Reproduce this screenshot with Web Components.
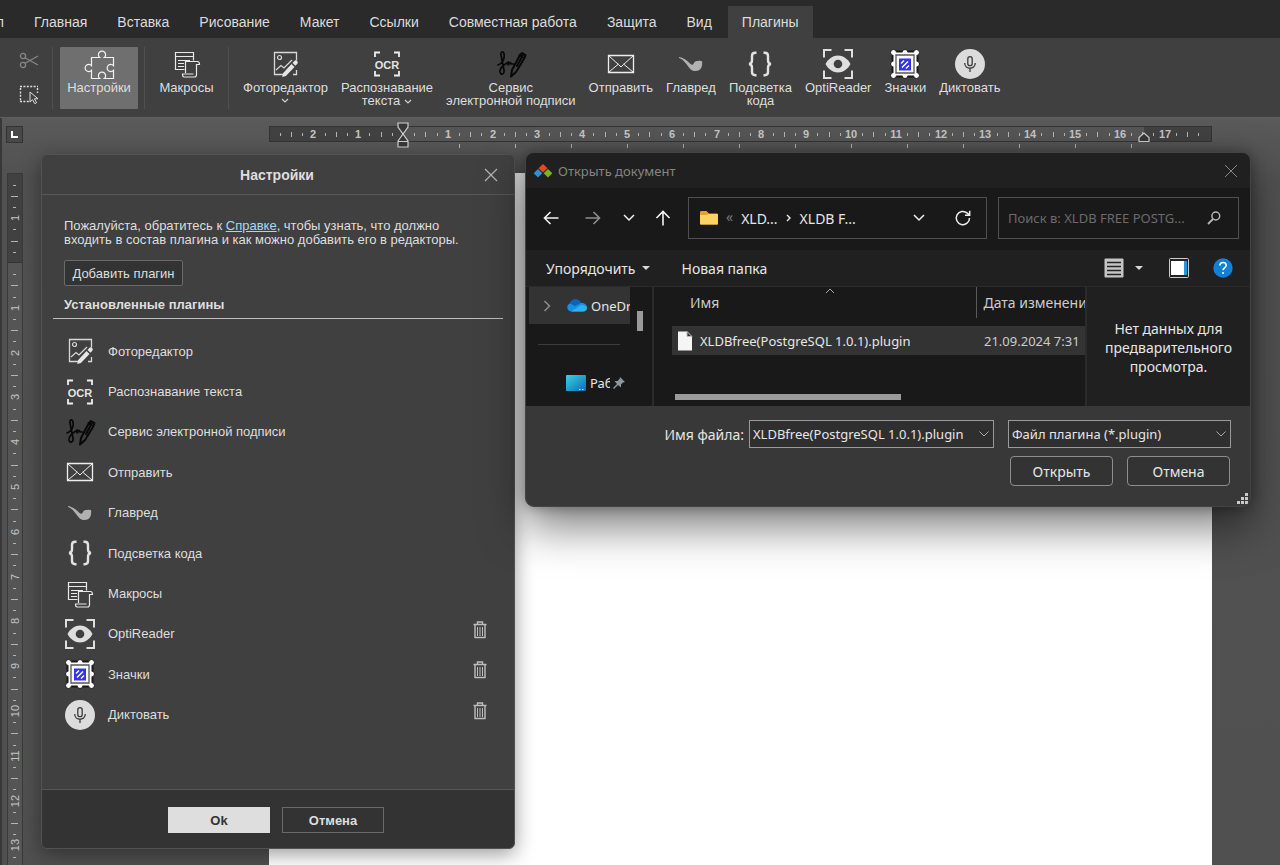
<!DOCTYPE html>
<html lang="ru">
<head>
<meta charset="utf-8">
<title>Плагины</title>
<style>
html,body{height:100%;margin:0}
body{background:#535353;font-family:"Liberation Sans",Arial,sans-serif;font-size:13px;color:#dedede;overflow:hidden}
</style>
</head>
<body>
<editor-app></editor-app>
<script>
const ICONS = {
cut:[20,20,`<g fill="none" stroke="#858585" stroke-width="1.3"><circle cx="4" cy="5" r="2.6"/><circle cx="4" cy="14" r="2.6"/><path d="M6 6.7 19 14M6 12.3 19 5"/></g>`],
marquee:[20,20,`<path d="M1 1.5h18M1 16.5h10M1.5 3v13M18.5 3v5" fill="none" stroke="#ddd" stroke-width="1.4" stroke-dasharray="2 1.4"/><path d="M11 7v10l2.5-2.3 2.3 4 1.8-1-2.2-3.9H19z" fill="#404040" stroke="#ddd"/>`],
puzzle:[30,30,`<path d="M7.5 8.5h8.2a3.6 3.6 0 1 1 4.6 0h9.2v8.2a3.6 3.6 0 1 0 0 4.6v8.2h-9.2a3.6 3.6 0 1 0-4.6 0H7.5v-8.2a3.6 3.6 0 1 1 0-4.6z" fill="none" stroke="#f2f2f2" stroke-width="1.2"/>`],
macros:[30,30,`<g fill="none" stroke="#e8e8e8" stroke-width="1.2"><path d="M12.5 20.5H3.5V3.5h18v8M3.5 7.5h18M6 11.5h12M6 14.5h6M6 17.5h6"/><path d="M13.5 24V12.500h12c1.600 0 2 1 2 3h-3v10c0 2-.8 2.500-2 2.500H12c-1 0-1.500-1-1.500-3h11"/></g>`],
photo:[30,30,`<g fill="none" stroke="#d8d8d8"><path d="M14 25.500H4.500v-22h22v8M26.500 21v4.500H23" stroke-width="1.300"/><circle cx="9.500" cy="8.500" r="2" stroke-width="1.200"/><path d="m6 21 5-4.500 3 2.500 8-8" stroke-width="1.200"/></g><path d="m13 24.300 8.500-9.200 3 2.800-8.600 9.200-3.700.8zM22.500 14l1.800-1.900a1.900 1.900 0 0 1 2.800 0 1.900 1.900 0 0 1 .2 2.700l-1.800 1.900z" fill="#e6e6e6"/>`],
ocr:[30,30,`<path d="M3 8V3.500h5M22 3.500h5V8M27 22v4.500h-5M8 26.500H3V22" fill="none" stroke="#eee" stroke-width="1.800"/><text x="15" y="19.500" text-anchor="middle" font-family="Liberation Sans" font-size="11" font-weight="bold" fill="#e4e4e4">OCR</text>`],
sign:[30,30,`<g fill="none" stroke="#080808" stroke-linecap="round" stroke-linejoin="round"><path d="M2 16c4-1 7-6 6-11-.4-3-3.500-3-3 1l3 15c.7 4-3 6-4 2-.5-3 3-7 7-9l1.500-1-.5 3 2.500-2.500.5 1.500h3" stroke-width="1.700"/><path d="m16 21 8-15 2-2 3.500 2-1 3-8.500 14-5 4.500zM23.500 6l5 3M27 6l-6 11" stroke-width="2"/></g>`],
mail:[30,30,`<g fill="none" stroke="#eee"><path d="M2.500 6.500h25v17h-25z" stroke-width="1.300"/><path d="m3 7 9.500 8.500L15 18l2.500-2.500L27 7M3 23l9.500-8M27 23l-9.500-8"/></g>`],
pipe:[30,30,`<path d="M3 8c4 .5 8 3.500 11 6.500 2 1.800 3 1.700 4-.5.700-1.500 2-2 4-1.900 1.500-.6 3.300-.4 4.200.3-.1 3.500.1 6.500-2.900 8.500-2.600 1.700-6.600 1.500-9-1C11 16.500 8 10.500 3 9z" fill="#b1b1b1"/>`],
braces:[30,30,`<path d="M11.500 3.800H10.300c-2.300 0-3.300 1-3.300 3.200v4.300c0 2.200-.9 3.500-3 3.700 2.100.2 3 1.500 3 3.700V23c0 2.200 1 3.200 3.300 3.200h1.200M18.500 3.800h1.200C22 3.800 23 4.800 23 7v4.300c0 2.200.9 3.500 3 3.700-2.100.2-3 1.500-3 3.700V23c0 2.200-1 3.200-3.300 3.200h-1.200" fill="none" stroke="#e2e2e2" stroke-width="2.400"/>`],
eye:[30,30,`<path d="M1 8.500V1h7.500M21.500 1H29v7.500M29 21.500V29h-7.500M8.500 29H1v-7.500" fill="none" stroke="#dedede" stroke-width="2"/><path d="M2.500 15C5.500 9.500 10 6.500 15 6.500S24.500 9.500 27.500 15C24.500 20.500 20 23.500 15 23.500S5.500 20.500 2.500 15z" fill="#dedede"/><circle cx="15" cy="15" r="4.300" fill="#404040"/>`],
stamp:[30,30,`<g stroke="#181818" stroke-width="5"><path d="M4 4h22v22H4z"/></g><g fill="#fff" stroke="#181818" stroke-width="1"><circle cx="3.500" cy="3.500" r="3"/><circle cx="15" cy="3.500" r="3"/><circle cx="26.500" cy="3.500" r="3"/><circle cx="3.500" cy="15" r="3"/><circle cx="26.500" cy="15" r="3"/><circle cx="3.500" cy="26.500" r="3"/><circle cx="15" cy="26.500" r="3"/><circle cx="26.500" cy="26.500" r="3"/></g><path d="M3.500 3.500h23v23h-23z" fill="#fff"/><path d="M6 6h18v18H6z" fill="#fff" stroke="#555" stroke-width="1.300"/><path d="M9 9.500h12v12H9z" fill="#3434e8"/><path d="m11 14.500 3-3M12 18.500l6-6M16 19.500l3-3" stroke="#fff" stroke-width="1.500"/>`],
mic:[30,30,`<circle cx="15" cy="15" r="15" fill="#dcdcdc"/><g fill="none" stroke="#3c3c3c" stroke-width="1.300"><rect x="12.800" y="7.700" width="4.400" height="9" rx="2.200"/><path d="M9.700 14c0 7 10.600 7 10.600 0M15 19.500V23"/></g>`],
trash:[14,18,`<g fill="none" stroke="#bdbdbd"><path d="M0.500 3.500h13M4.500 3V1h5v2" stroke-width="1.400"/><path d="M2 4v12.500h10V4" stroke-width="1.400"/><path d="M4.500 6v9M7 6v9M9.500 6v9"/></g>`],
close:[14,14,`<path d="m1 1 12 12M13 1 1 13" fill="none" stroke="#b5b5b5" stroke-width="1.200"/>`],
closeDim:[14,14,`<path d="m1 1 12 12M13 1 1 13" fill="none" stroke="#858585"/>`],
chev:[8,6,`<path d="m1 1 3 3 3-3" fill="none" stroke="#d0d0d0" stroke-width="1.200"/>`],
chevron:[12,8,`<path d="m1 1 5 5 5-5" fill="none" stroke="#f0f0f0" stroke-width="1.500"/>`],
chevThin:[12,8,`<path d="m1.500 1.500 4.500 4.500 4.500-4.500" fill="none" stroke="#aaa"/>`],
chevUp:[10,6,`<path d="m1 5 4-4 4 4" fill="none" stroke="#a8a8a8"/>`],
chevR:[8,12,`<path d="m1.500 1 5 5-5 5" fill="none" stroke="#8c8c8c" stroke-width="1.500"/>`],
chevRs:[6,10,`<path d="m1 2 3 3-3 3" fill="none" stroke="#eee" stroke-width="1.400"/>`],
back:[16,16,`<path d="M15.500 8H1.500M7.500 2l-6 6 6 6" fill="none" stroke="#f2f2f2" stroke-width="1.600"/>`],
fwd:[16,16,`<path d="M.5 8h14M8.500 2l6 6-6 6" fill="none" stroke="#8d8d8d" stroke-width="1.600"/>`],
up:[16,16,`<path d="M8 15.500v-14M1.500 8 8 1.500 14.500 8" fill="none" stroke="#f2f2f2" stroke-width="1.600"/>`],
folder:[18,14,`<path d="M0 1.500C0 .5.500 0 1.500 0h5L9 2.500h7.500c1 0 1.500.5 1.500 1.500v8c0 1-.5 1.500-1.500 1.500h-15C.5 13.500 0 13 0 12z" fill="#e5a320"/><path d="M0 4h7l1.500-1H17c.7 0 1 .3 1 1v8.500c0 .7-.4 1-1 1H1c-.7 0-1-.3-1-1z" fill="#fbd264"/>`],
refresh:[16,16,`<path d="M14.500 8a6.600 6.600 0 1 1-2.200-4.900L14.500 5M14.700 0.800V5.300H10" fill="none" stroke="#eee" stroke-width="1.500"/>`],
search:[14,14,`<g fill="none" stroke="#b5b5b5"><circle cx="8.800" cy="5" r="3.900" stroke-width="1.500"/><path d="m6 8-5 5" stroke-width="1.800"/></g>`],
logo:[18,14,`<path d="m9 0 4.500 4.200L9 8.400 4.500 4.200z" fill="#e64a1c"/><path d="m4 5 4.300 4.300L4 13.600-.3 9.300z" fill="#2f8ed6"/><path d="m14 5 4.300 4.300-4.300 4.300-4.300-4.300z" fill="#7ab51d"/>`],
caret:[8,4,`<path d="M0 0h8L4 4z" fill="#d8d8d8"/>`],
list:[20,20,`<rect x=".500" y=".500" width="19" height="19" rx="1" fill="#c4c4c4"/><path d="M3 4.500h14M3 8.500h14M3 12.500h14M3 16.500h14" stroke="#222" stroke-width="1.300"/>`],
pane:[20,20,`<rect x=".500" y=".500" width="19" height="19" rx="1" fill="#222" stroke="#ccc"/><path d="M2 3h13v14H2z" fill="#fff"/><path d="M15 3h3v14h-3z" fill="#2396e0"/>`],
help:[20,20,`<circle cx="10" cy="10" r="9.700" fill="#0f82d8"/><path d="M6.800 7.500c.2-4 6.500-4 6.400-.2 0 2.500-3.200 2.600-3.200 5" fill="none" stroke="#fff" stroke-width="1.600"/><circle cx="10" cy="15" r="1.100" fill="#fff"/>`],
cloud:[20,13,`<path d="M4 12.500a4.200 4.200 0 0 1-1-8.100C4.500.500 11-1.500 14 4c3-.3 6 1.500 6 4.700 0 2.400-1.800 3.800-4 3.800z" fill="#1690df"/><path d="M3 4.400C4.500.500 11-1.500 14 4L8 7z" fill="#0a63bf"/><path d="M4 12.500 14 6c3-.5 6 .8 6 3 0 2-1.800 3.500-4 3.500z" fill="#2cb1f3"/>`],
desktop:[20,16,`<defs><linearGradient id="g" x2="1" y2="1"><stop stop-color="#34d5e2"/><stop offset="1" stop-color="#1269b8"/></linearGradient></defs><rect width="20" height="16" rx="1" fill="url(#g)"/><path d="M13 14.500h1.500M16 14.500h1.500" stroke="#ddf"/>`],
pin:[12,12,`<path d="m7 0 5 5-2 .5-2 2v3L5 8 1 12l-1-1 4-4-2.500-3h3l2-2z" fill="#8e979e"/>`],
file:[16,20,`<path d="M1 .5h9l5 5v14H1z" fill="#f5f5f5"/><path d="M10 .5v5h5z" fill="#333" stroke="#bbb"/>`],
grip:[12,12,`<path d="M9 0h3v3H9zM5 4h3v3H5zM9 4h3v3H9zM1 8h3v3H1zM5 8h3v3H5zM9 8h3v3H9z" fill="#c9c9c9"/>`]
};

const define = (name, css, html, setup) => customElements.define(name, class extends HTMLElement {
  connectedCallback() {
    if (this.shadowRoot) return;
    const root = this.attachShadow({mode: "open"});
    const t = document.createElement("template");
    t.innerHTML = `<style>*{box-sizing:border-box}button{font:inherit;color:inherit;background:none;border:0;padding:0;margin:0}${css}</style>` +
      (typeof html === "function" ? html(this) : html);
    root.append(t.content.cloneNode(true));
    if (setup) setup(this, root);
  }
});

define("ui-icon", `:host{display:block;flex:none}svg{display:block;overflow:visible}`, el => {
  const [w, h, body] = ICONS[el.getAttribute("name")];
  return `<svg width="${w}" height="${h}" viewBox="0 0 ${w} ${h}" aria-hidden="true">${body}</svg>`;
});

define("menu-tabs", `
:host{display:block;background:#2a2a2a;height:38px;padding-top:6px}
nav{display:flex;gap:2px}
button{height:32px;padding:0 14px;font-size:14px;color:#dcdcdc;white-space:nowrap}
button:first-child{width:18px;padding-left:0;overflow:hidden;display:flex;justify-content:flex-end;align-items:center}
.on{background:#404040}`,
`<nav>${["Файл","Главная","Вставка","Рисование","Макет","Ссылки","Совместная работа","Защита","Вид","Плагины"]
  .map(t => `<button${t === "Плагины" ? ' class="on"' : ""}>${t}</button>`).join("")}</nav>`);

define("tool-button", `
:host{display:block;flex:none}
button{display:flex;flex-direction:column;align-items:center;width:100%;height:62px;padding:2px 6px 0;border-radius:1px;line-height:13px;text-align:center}
:host([active]) button{background:#6f6f6f}
.label{margin-top:2px;white-space:nowrap}
.more{height:13px;display:flex;align-items:center}
.more.in{display:inline-flex;height:6px;margin-left:4px}`,
el => {
  const inl = el.getAttribute("more") === "inline";
  return `<button><ui-icon name="${el.getAttribute("icon")}"></ui-icon><span class="label"><slot></slot>${inl ? '<span class="more in"><ui-icon name="chev"></ui-icon></span>' : ""}</span>${el.getAttribute("more") === "below" ? '<span class="more"><ui-icon name="chev"></ui-icon></span>' : ""}</button>`;
});

define("ribbon-bar", `
:host{display:flex;background:#404040;height:80px;border-bottom:1px solid #5e5e5e;padding-top:9px}
.clip{width:52px;height:62px;padding:4px 0 0 19px;display:grid;align-content:start;gap:14px}
.clip button{height:20px;display:flex}
.sep{width:1px;height:62px;background:#505050}
.a{width:78px;margin:0 6px 0 7px}
.b{width:83px}
.rest{display:flex;padding-left:8px;gap:1px}`,
`<div class="clip"><button aria-label="Вырезать"><ui-icon name="cut"></ui-icon></button><button aria-label="Выделить"><ui-icon name="marquee"></ui-icon></button></div>
<div class="sep"></div><tool-button class="a" icon="puzzle" active>Настройки</tool-button><div class="sep"></div>
<tool-button class="b" icon="macros">Макросы</tool-button><div class="sep"></div>
<div class="rest">
<tool-button icon="photo" more="below">Фоторедактор</tool-button>
<tool-button icon="ocr" more="inline">Распознавание<br>текста</tool-button>
<tool-button icon="sign">Сервис<br>электронной подписи</tool-button>
<tool-button icon="mail">Отправить</tool-button>
<tool-button icon="pipe">Главред</tool-button>
<tool-button icon="braces">Подсветка<br>кода</tool-button>
<tool-button icon="eye">OptiReader</tool-button>
<tool-button icon="stamp">Значки</tool-button>
<tool-button icon="mic">Диктовать</tool-button>
</div>`);

/* One centimetre on the rulers, in pixels at the current zoom. */
const CM = 44.8;
function scale(from, length, zero, vertical) {
  let s = "";
  for (let q = from * 4 + 1; zero + q * CM / 4 < length - 8; q++) {
    const p = Math.round(zero + q * CM / 4);
    if (q === 0) continue;
    if (q % 4 === 0) {
      s += vertical
        ? `<text transform="translate(12 ${p}) rotate(-90)">${Math.abs(q / 4)}</text>`
        : `<text x="${p}" y="12">${Math.abs(q / 4)}</text>`;
    } else if (vertical) {
      const l = q % 2 === 0 ? 3 : 1;
      s += `<path d="M${7 - l} ${p + .5}h${2 * l + 1}"/>`;
    } else {
      const l = q % 2 === 0 ? 2 : 1;
      s += `<path d="M${p + .5} ${8 - l}v${2 * l + 1}"/>`;
    }
  }
  return s;
}
const RULER_TEXT = `g{fill:none;stroke:#b4b4b4}text{font:bold 11px "Liberation Sans",sans-serif;fill:#c4c4c4;stroke:none;text-anchor:middle}`;
const drawOnResize = (el, draw) => { draw(); addEventListener("resize", draw); };

define("ruler-h", `
:host{display:block;position:relative;height:22px}
.bar{display:flex;height:16px;border:1px solid #333;overflow:hidden}
.bar i{background:#414141}.bar i:first-child{width:133px}.bar i:last-child{width:67px}.bar b{flex:1;background:#555}
svg{position:absolute;inset:0;overflow:hidden;width:100%;height:22px}
${RULER_TEXT}
.l,.r{position:absolute;overflow:visible;width:12px;height:26px}
.l{left:128px;top:-4px}.r{left:auto;right:62px;top:-4px}`,
`<div class="bar"><i></i><b></b><i></i></div><svg><g></g></svg>
<svg class="l" viewBox="0 0 12 26"><path d="M1 1h10v4L6 12 1 5zM1 19l5-7 5 7v6H1zM1 19.500h10" fill="#383838" stroke="#d0d0d0" stroke-width="1.200"/></svg>
<svg class="r" viewBox="0 0 12 26"><path d="M1 19.500V15.500L6 11l5 4.500v4z" fill="#383838" stroke="#d0d0d0" stroke-width="1.200"/></svg>`,
(el, root) => drawOnResize(el, () => {
  const w = el.clientWidth;
  let tabs = "";
  for (let x = 190; x < w - 68; x += 56) tabs += `<path d="M${x + .5} 18v4"/>`;
  root.querySelector("g").innerHTML = scale(-3, w, 134, false) + tabs;
}));

define("ruler-v", `
:host{display:block;position:relative;overflow:hidden;border:1px solid #3a3a3a;border-bottom:0;background:#555;width:16px}
i{display:block;height:89px;background:#414141;border-bottom:1px solid #333}
svg{position:absolute;left:-1px;top:0;width:16px;height:100%}${RULER_TEXT}text{font-weight:normal}`,
`<i></i><svg><g></g></svg>`,
(el, root) => drawOnResize(el, () => {
  root.querySelector("g").innerHTML = scale(-2, innerHeight - el.getBoundingClientRect().top, 89, true);
}));

define("editor-canvas", `
:host{display:grid;grid-template-columns:269px 1fr 68px;grid-template-rows:55px 1fr;background:linear-gradient(#5a5a5a,#515151 60px,#505050);border-left:2px solid #383838;min-height:0}
.corner{margin:8px 0 0 4px;width:17px;height:17px;border:1px solid #333;background:#484848;display:grid;place-items:center}
.corner i{width:7px;height:7px;border:solid #fff;border-width:0 0 2px 2px}
ruler-h{margin:8px 0 0 -2px}
ruler-v{margin-left:5px}
.page{background:#fff;margin-left:-2px}`,
`<div><div class="corner"><i></i></div></div><ruler-h></ruler-h><div></div><ruler-v></ruler-v><div class="page"></div><div></div>`);

define("plugin-row", `
:host{display:flex;align-items:center;min-height:0}
ui-icon{margin-right:13px}
span{flex:1}
button{align-self:flex-start;margin-top:7px}button ui-icon{margin:0}`,
el => `<ui-icon name="${el.getAttribute("icon")}"></ui-icon><span><slot></slot></span>${el.hasAttribute("removable") ? '<button aria-label="Удалить"><ui-icon name="trash"></ui-icon></button>' : ""}`);

define("settings-dialog", `
:host{display:flex;flex-direction:column;box-sizing:border-box;background:#404040;border:1px solid #525252;border-radius:6px;overflow:hidden;box-shadow:0 5px 20px rgba(0,0,0,.4)}
header{display:flex;align-items:center;height:40px;border-bottom:1px solid #585858;padding:0 16px 0 28px}
h2{flex:1;margin:0;text-align:center;font-size:14px}
p{margin:24px 0 0;line-height:14px;padding:0 22px}
a{color:#a9d8ee}
.add{margin:13px 0 0 22px;width:119px;height:26px;border:1px solid #6a6a6a;background:#333;border-radius:2px;align-self:flex-start}
h3{margin:11px 11px 0;padding:0 11px 5px;font-size:13px;line-height:16px;border-bottom:1px solid #bdbdbd}
.list{flex:1;display:grid;grid-auto-rows:1fr;padding:12px 27px 0 23px;margin-bottom:54px;min-height:0}
footer{height:59px;background:#333;border-top:1px solid #555;display:flex;gap:12px;justify-content:center;padding:17px 4px 0 0}
footer button{width:102px;height:26px;font-weight:bold;border:1px solid #696969}
.ok{background:#dedede;color:#333;border-color:#dedede!important}`,
`<header><h2>Настройки</h2><button aria-label="Закрыть"><ui-icon name="close"></ui-icon></button></header>
<p>Пожалуйста, обратитесь к <a href="#">Справке</a>, чтобы узнать, что должно<br>входить в состав плагина и как можно добавить его в редакторы.</p>
<button class="add">Добавить плагин</button>
<h3>Установленные плагины</h3>
<div class="list">
<plugin-row icon="photo">Фоторедактор</plugin-row>
<plugin-row icon="ocr">Распознавание текста</plugin-row>
<plugin-row icon="sign">Сервис электронной подписи</plugin-row>
<plugin-row icon="mail">Отправить</plugin-row>
<plugin-row icon="pipe">Главред</plugin-row>
<plugin-row icon="braces">Подсветка кода</plugin-row>
<plugin-row icon="macros">Макросы</plugin-row>
<plugin-row icon="eye" removable>OptiReader</plugin-row>
<plugin-row icon="stamp" removable>Значки</plugin-row>
<plugin-row icon="mic" removable>Диктовать</plugin-row>
</div>
<footer><button class="ok">Ok</button><button>Отмена</button></footer>`);

define("path-bar", `
:host{display:flex;box-sizing:border-box;align-items:center;height:62px;padding:0 11px 2px 17px;background:#191919}
.n{width:16px;height:16px;display:grid;place-items:center;margin-right:26px}
.n.c{margin-right:18px}.n.d{margin-right:20px}.n.e{margin-right:17px}
.box{height:42px;border:1px solid #505050;display:flex;align-items:center}
.addr{width:299px;padding:0 15px 0 11px}
.addr .s{color:#777;margin:0 8px 4px}.addr .g{margin:0 8px}.addr .x{flex:1}.addr .r{margin-left:30px}
.find{flex:1;margin-left:11px;padding:0 17px 0 9px;min-width:0}
input{flex:1;min-width:0;background:none;border:0;outline:0;padding:0;font:inherit;font-size:13px;color:#ccc;text-overflow:ellipsis}
input::placeholder{color:#6b6b6b;opacity:1}`,
`<button class="n" aria-label="Назад"><ui-icon name="back"></ui-icon></button><button class="n d" aria-label="Вперёд"><ui-icon name="fwd"></ui-icon></button><button class="n c" aria-label="Журнал"><ui-icon name="chevron"></ui-icon></button><button class="n e" aria-label="Вверх"><ui-icon name="up"></ui-icon></button>
<div class="box addr"><ui-icon name="folder"></ui-icon><span class="s">«</span><span>XLD...</span><ui-icon class="g" name="chevRs"></ui-icon><span class="x">XLDB F...</span><button aria-label="Список"><ui-icon name="chevron"></ui-icon></button><button class="r" aria-label="Обновить"><ui-icon name="refresh"></ui-icon></button></div>
<div class="box find"><input aria-label="Поиск" placeholder="Поиск в: XLDB FREE POSTG..."><ui-icon name="search"></ui-icon></div>`);

define("file-commands", `
:host{display:flex;box-sizing:border-box;align-items:center;height:36px;padding:0 17px 0 20px;background:#202020}
.o{display:flex;align-items:center;gap:6px;margin-right:32px}
.x{flex:1}.v{display:flex;align-items:center;gap:11px;margin-right:26px}.p{margin-right:24px}`,
`<button class="o">Упорядочить<ui-icon name="caret"></ui-icon></button><button>Новая папка</button><span class="x"></span>
<button class="v" aria-label="Вид"><ui-icon name="list"></ui-icon><ui-icon name="caret"></ui-icon></button><button class="p" aria-label="Область просмотра"><ui-icon name="pane"></ui-icon></button><button aria-label="Справка"><ui-icon name="help"></ui-icon></button>`);

define("file-tree", `
:host{display:flex;box-sizing:border-box;width:128px;border-right:2px solid #2b2b2b;padding-left:3px}
.t{width:101px}
.i{display:flex;align-items:center;height:37px;padding-left:14px;overflow:hidden;white-space:nowrap;font-size:13px}
.i:first-child{background:#333}
.i ui-icon{margin-right:4px}.i .c{margin-right:16px}
hr{border:0;border-top:1px solid #3c3c3c;margin:20px 10px 19px 9px}
.w{padding-left:37px}.w span{width:20px;overflow:hidden}.w .p{margin:0 0 0 3px}
.bar{width:6px;height:20px;background:#9a9a9a;margin:24px 0 0 7px}`,
`<div class="t"><div class="i"><ui-icon class="c" name="chevR"></ui-icon><ui-icon name="cloud"></ui-icon>OneDrive</div><hr><div class="i w"><ui-icon name="desktop"></ui-icon><span>Рабочий стол</span><ui-icon class="p" name="pin"></ui-icon></div></div><div class="bar"></div>`);

define("file-list", `
:host{display:block;flex:1;min-width:0;box-sizing:border-box;padding-left:18px;overflow:hidden;position:relative}
table{width:413px;table-layout:fixed;border-collapse:collapse;white-space:nowrap}
th{font-weight:normal;text-align:left;height:31px;padding:0 0 0 18px;color:#ccc}
th:last-child{width:109px;padding:0 0 0 7px;border-left:1px solid #5a5a5a;overflow:hidden}
.gap td{height:8px;padding:0}
td{padding:0;height:29px;background:#333;overflow:hidden;font-size:13px}
.gap td{background:none}
td:last-child{padding-left:8px;color:#ccc}
.f{display:flex;align-items:center;padding-left:5px;gap:7px}
.bar{height:6px;width:226px;background:#9a9a9a;margin:39px 0 0 3px}
.sort{position:absolute;left:171px;top:1px}`,
`<table><thead><tr><th>Имя</th><th>Дата изменения</th></tr></thead><tbody><tr class="gap"><td colspan="2"></td></tr><tr><td><div class="f"><ui-icon name="file"></ui-icon>XLDBfree(PostgreSQL 1.0.1).plugin</div></td><td>21.09.2024 7:31</td></tr></tbody></table><div class="bar"></div><ui-icon class="sort" name="chevUp"></ui-icon>`);

define("file-dialog", `
:host{display:block;box-sizing:border-box;background:#383838;border:1px solid #444;border-radius:9px;overflow:hidden;color:#e6e6e6;font:14px "Noto Sans","Open Sans",sans-serif;box-shadow:0 20px 44px rgba(0,0,0,.5),0 0 14px rgba(0,0,0,.35)}
header{height:35px;background:#202020;display:flex;align-items:center;gap:6px;padding:0 12px 0 8px;color:#858585;font-size:13px}
header span{flex:1}
.m{display:flex;height:120px;background:#191919;border-top:1px solid #2b2b2b}
aside{width:165px;border-left:2px solid #2b2b2b;background:#202020;text-align:center;line-height:19px;padding:32px 14px 0}
form{display:grid;grid-template-columns:1fr 245px 223px;column-gap:14px;padding:14px 19px 0 0;margin:0;height:100px;align-content:start}
label{text-align:right;align-self:center;margin-right:-9px}
.k{display:grid;align-items:center}
.k>*{grid-area:1/1}
.k ui-icon{justify-self:end;margin-right:4px;pointer-events:none}
input,select{appearance:none;width:100%;height:28px;background:#2f2f2f;border:1px solid #9a9a9a;border-radius:0;color:inherit;font:inherit;font-size:13px;padding:0 22px 0 3px;outline:0;margin:0}
.b{grid-column:3;display:flex;justify-content:space-between;padding:8px 1px 0 2px}
.b button{width:103px;height:30px;border:1px solid #8e8e8e;border-radius:4px;background:#333}
.grip{position:absolute;right:2px;bottom:1px}`,
`<header><ui-icon name="logo"></ui-icon><span>Открыть документ</span><button aria-label="Закрыть"><ui-icon name="closeDim"></ui-icon></button></header>
<path-bar></path-bar><file-commands></file-commands>
<div class="m"><file-tree></file-tree><file-list></file-list><aside>Нет данных для предварительного просмотра.</aside></div>
<form onsubmit="return false"><label for="n">Имя файла:</label><div class="k"><input id="n" value="XLDBfree(PostgreSQL 1.0.1).plugin"><ui-icon name="chevThin"></ui-icon></div>
<div class="k"><select aria-label="Тип файла"><option>Файл плагина (*.plugin)</option></select><ui-icon name="chevThin"></ui-icon></div>
<div class="b"><button>Открыть</button><button type="button">Отмена</button></div></form><ui-icon class="grip" name="grip"></ui-icon>`);

define("editor-app", `
:host{display:flex;flex-direction:column;height:100vh;position:relative}
editor-canvas{flex:1}
settings-dialog{position:absolute;left:41px;top:154px;bottom:16px;width:474px}
file-dialog{position:absolute;left:525px;top:152px;width:726px}`,
`<menu-tabs></menu-tabs><ribbon-bar></ribbon-bar><editor-canvas></editor-canvas><settings-dialog></settings-dialog><file-dialog></file-dialog>`);
</script>
</body>
</html>
